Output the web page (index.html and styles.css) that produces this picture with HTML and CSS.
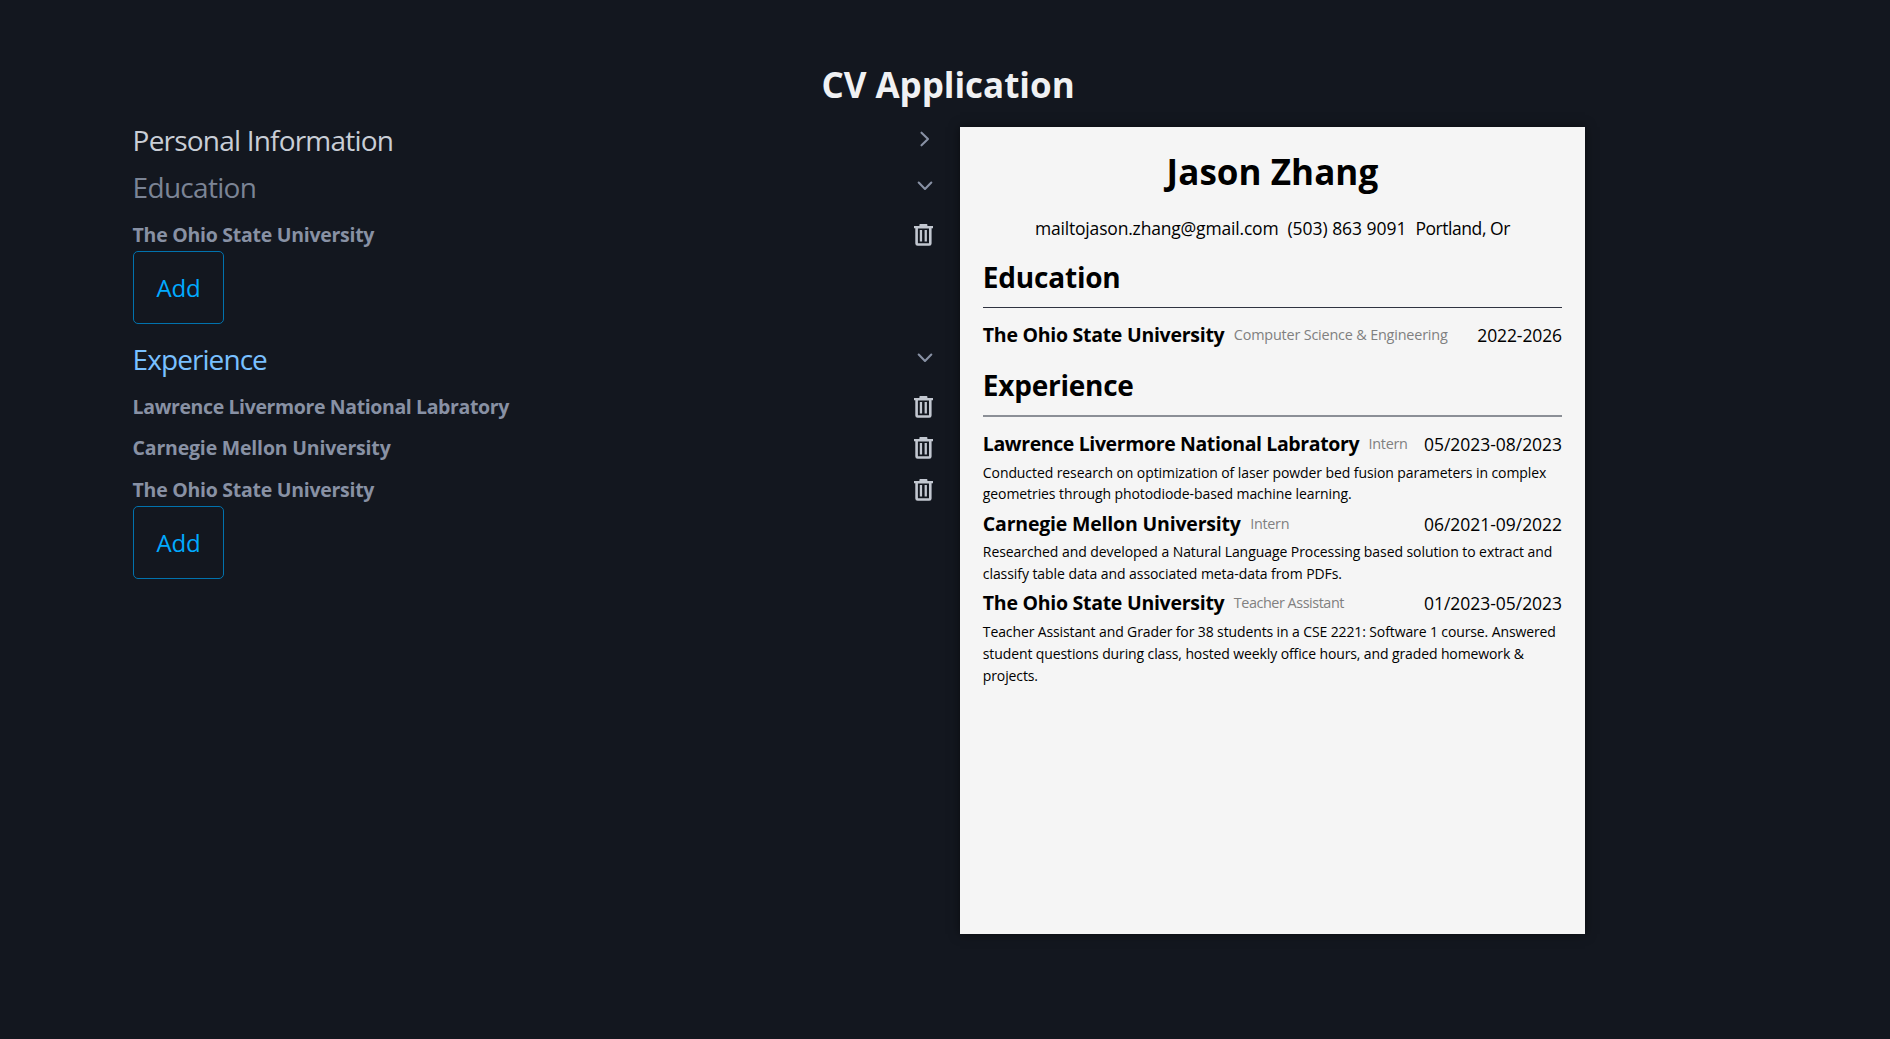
FILE: index.html
```html
<!DOCTYPE html>
<html lang="en">
<head>
<meta charset="utf-8">
<title>CV Application</title>
<link rel="stylesheet" href="styles.css">
</head>
<body>
<svg width="0" height="0" class="defs">
  <symbol id="chevron-right" viewBox="0 0 16 16"><path d="M4.5 1.7 11 8l-6.5 6.3"/></symbol>
  <symbol id="chevron-down" viewBox="0 0 16 16"><path d="M1.7 4.6 8 11l6.3-6.4"/></symbol>
  <symbol id="trash" viewBox="0 0 19 22">
    <path d="M6.2 0h6.4q.8 0 .8.8V2H19v2.3h-1.4v15.2q0 2.3-2.3 2.3H3.6q-2.3 0-2.3-2.3V4.3H0V2h5.4V.8Q5.4 0 6.2 0ZM3.9 4.6v14.7h11.1V4.6ZM5.8 6H8.1v11.6H5.8ZM10.6 6h2.3v11.6h-2.3Z" fill-rule="evenodd"/>
  </symbol>
</svg>
<header class="header"><h1>CV Application</h1></header>
<main class="layout">
  <div class="editor">
    <section>
      <div class="summary personal"><span>Personal Information</span><svg class="chevron"><use href="#chevron-right"/></svg></div>
    </section>
    <section>
      <div class="summary education"><span>Education</span><svg class="chevron"><use href="#chevron-down"/></svg></div>
      <div class="entries">
        <div class="entry"><strong class="ohio">The Ohio State University</strong><svg class="trash"><use href="#trash"/></svg></div>
      </div>
      <button class="add">Add</button>
    </section>
    <section>
      <div class="summary experience"><span>Experience</span><svg class="chevron"><use href="#chevron-down"/></svg></div>
      <div class="entries">
        <div class="entry"><strong class="lawrence">Lawrence Livermore National Labratory</strong><svg class="trash"><use href="#trash"/></svg></div>
        <div class="entry"><strong class="carnegie">Carnegie Mellon University</strong><svg class="trash"><use href="#trash"/></svg></div>
        <div class="entry"><strong class="ohio">The Ohio State University</strong><svg class="trash"><use href="#trash"/></svg></div>
      </div>
      <button class="add">Add</button>
    </section>
  </div>
  <article class="paper">
    <h2 class="name">Jason Zhang</h2>
    <div class="contact"><span class="mail">mailtojason.zhang@gmail.com</span><span class="phone">(503) 863 9091</span><span class="city">Portland, Or</span></div>
    <h3 class="heading education-heading">Education</h3>
    <hr>
    <div class="row"><strong class="ohio">The Ohio State University</strong><span class="role major">Computer Science &amp; Engineering</span><span class="date year">2022-2026</span></div>
    <h3 class="heading experience-heading">Experience</h3>
    <hr class="soft">
    <div class="row"><strong class="lawrence">Lawrence Livermore National Labratory</strong><span class="role">Intern</span><span class="date">05/2023-08/2023</span></div>
    <p class="optics">Conducted research on optimization of laser powder bed fusion parameters in complex geometries through photodiode-based machine learning.</p>
    <div class="row"><strong class="carnegie">Carnegie Mellon University</strong><span class="role">Intern</span><span class="date">06/2021-09/2022</span></div>
    <p class="language">Researched and developed a Natural Language Processing based solution to extract and classify table data and associated meta-data from PDFs.</p>
    <div class="row"><strong class="ohio">The Ohio State University</strong><span class="role teacher">Teacher Assistant</span><span class="date">01/2023-05/2023</span></div>
    <p class="teaching">Teacher Assistant and Grader for 38 students in a CSE 2221: Software 1 course. Answered student questions during class, hosted weekly office hours, and graded homework &amp; projects.</p>
  </article>
</main>
</body>
</html>
```
FILE: styles.css
```css
* { box-sizing: border-box; }
body {
  margin: 0;
  min-height: 100vh;
  background: #13171f;
  font-family: "Open Sans", "Noto Sans", sans-serif;
  color: #000;
}
h1, h2, h3, p { margin: 0; }
.defs { display: block; height: 0; }

.header {
  padding: 61px 0 0 6px;
  height: 116px;
  text-align: center;
}
.header h1 { font-size: 35px; line-height: 48px; color: #f0f1f3; letter-spacing: -.03px; }

.layout {
  display: flex;
  align-items: flex-start;
  gap: 27.4px;
  padding: 0 305.2px 0 132.6px;
}

.editor { flex: 1; }
.summary {
  display: flex;
  justify-content: space-between;
  align-items: center;
  height: 47px;
  font-size: 28px;
  line-height: 38px;
}
.personal { color: #c9ced6; letter-spacing: -.8px; }
.education { color: #7b8495; letter-spacing: -.7px; }
.experience { color: #79c0ff; letter-spacing: -.93px; }
.chevron {
  width: 16px;
  height: 16px;
  margin-bottom: 2px;
  fill: none;
  stroke: #8891a4;
  stroke-width: 2.1;
  stroke-linecap: round;
  stroke-linejoin: round;
}
.entries {
  display: flex;
  flex-direction: column;
  gap: 7.7px;
  padding-top: 7.5px;
}
.entry {
  display: flex;
  justify-content: space-between;
  align-items: center;
  height: 33.6px;
  font-size: 19.5px;
  line-height: 28px;
  color: #8891a4;
}
.entry strong { padding-top: 1px; }
.trash { width: 19px; height: 22px; margin-top: 1px; fill: #c2c7d0; }
.add {
  display: block;
  width: 91.7px;
  height: 72.6px;
  margin: 0 0 11.6px;
  padding: 1px 0 0;
  border: 1px solid #0172ad;
  border-radius: 5px;
  background: none;
  color: #01aaff;
  font: 24px/32px "Open Sans", "Noto Sans", sans-serif;
  letter-spacing: -.18px;
}

.ohio { letter-spacing: -.27px; }
.lawrence { letter-spacing: -.38px; }
.carnegie { letter-spacing: -.19px; }

.paper {
  width: 624.6px;
  height: 807.3px;
  margin-top: 11px;
  padding: 23px 22.8px 0 22.6px;
  background: #f5f5f5;
  box-shadow: 0 0 10px rgba(0, 0, 0, .5);
}
.name { font-size: 35px; line-height: 44px; text-align: center; letter-spacing: .05px; }
.contact {
  display: flex;
  justify-content: center;
  gap: 9px;
  margin-top: 21px;
  font-size: 17.5px;
  line-height: 27px;
}
.mail { letter-spacing: -.18px; }
.phone { letter-spacing: -.036px; }
.city { letter-spacing: -.45px; }
.heading { margin-top: 17px; font-size: 28px; line-height: 36px; }
.education-heading { letter-spacing: -.2px; }
.experience-heading { letter-spacing: -.248px; }
hr { height: 1px; margin: 12px 0 11px; border: 0; background: #2f3340; }
hr.soft { height: 2px; background: #8b8f96; }
.row {
  display: flex;
  align-items: baseline;
  height: 30px;
  padding-top: .9px;
  line-height: 30px;
  white-space: nowrap;
}
.row + .heading { margin-top: 18px; }
.row strong { margin-right: 9.4px; font-size: 19.5px; }
.role { align-self: flex-start; font-size: 14.4px; color: #808080; letter-spacing: -.287px; }
.major { letter-spacing: -.18px; }
.teacher { letter-spacing: -.45px; }
.date { margin-left: auto; font-size: 17.5px; letter-spacing: -.038px; }
.year { letter-spacing: -.1px; }
.paper p { margin: 3.7px 0 2.7px; font-size: 14px; line-height: 21.7px; }
.optics { letter-spacing: -.085px; }
.language { letter-spacing: -.07px; }
.teaching { letter-spacing: -.115px; }
```
